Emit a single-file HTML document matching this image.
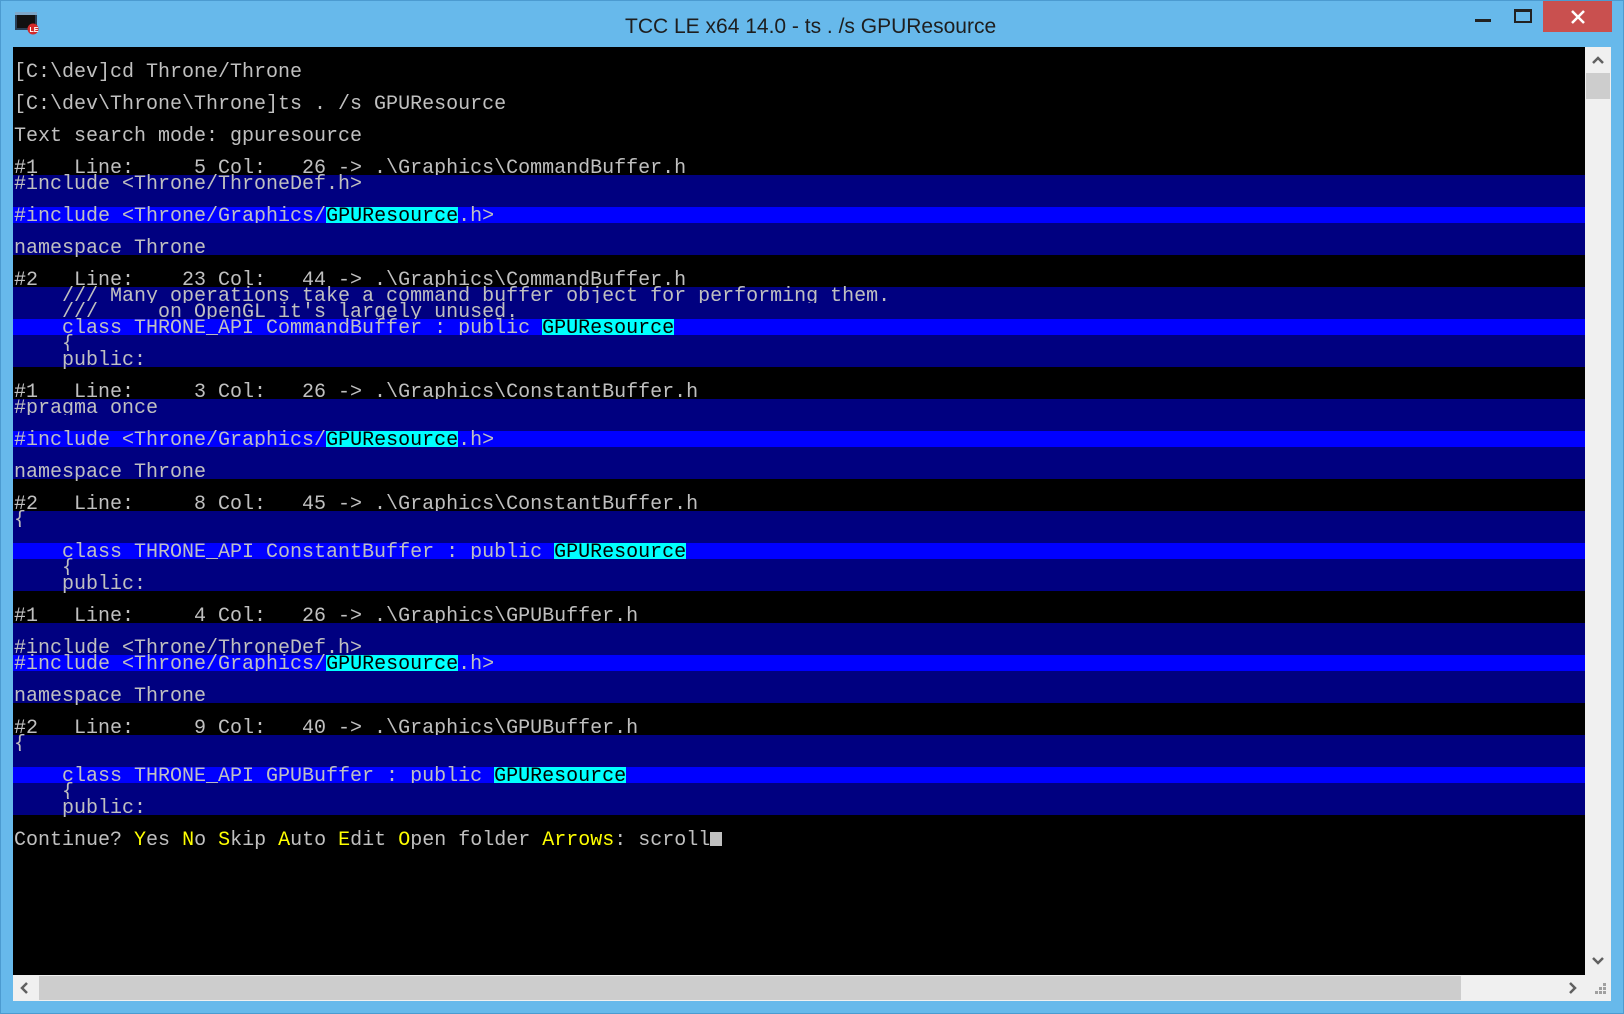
<!DOCTYPE html>
<html><head><meta charset="utf-8"><style>
*{margin:0;padding:0;box-sizing:border-box}
body{width:1624px;height:1014px;background:#67b9eb;position:relative;overflow:hidden;font-family:"Liberation Sans",sans-serif}
#frame{position:absolute;left:0;top:0;width:1624px;height:1014px;border:1px solid #4c9bd0}
#title{position:absolute;left:625px;top:15px;font-size:21px;color:#1e1e1e;white-space:nowrap}
#con{position:absolute;left:13px;top:47px;width:1572px;height:928px;background:#000;overflow:hidden}
.r{position:absolute;left:0;width:1572px;height:16px;font-family:"Liberation Mono",monospace;font-size:20px;line-height:19px;color:#c0c0c0;white-space:pre;padding-left:1px}
.d{background:#000080}.b{background:#0000ff}
.h{background:#00ffff;color:#000;display:inline-block;height:16px;line-height:19px;vertical-align:top}
.y{color:#ffff00}
.cur{display:inline-block;width:12px;height:14px;background:#c0c0c0;vertical-align:-1px}
#vs{position:absolute;left:1585px;top:47px;width:26px;height:928px;background:#f0f0f0}
#hs{position:absolute;left:13px;top:975px;width:1572px;height:26px;background:#f0f0f0}
#corner{position:absolute;left:1585px;top:975px;width:26px;height:26px;background:#f0f0f0}
</style></head><body>
<div id="frame"></div>
<svg style="position:absolute;left:14px;top:11px" width="26" height="24"><rect x="1" y="1" width="22" height="18" fill="#2a3f55"/><rect x="3" y="4" width="18" height="13" fill="#111"/><rect x="1" y="1" width="22" height="3" fill="#7fa7c9"/><circle cx="19" cy="18" r="5.5" fill="#d42a2a"/><text x="15.5" y="21" font-size="7" fill="#fff" font-family="Liberation Sans" font-weight="bold">LE</text></svg>
<div id="title">TCC LE x64 14.0 - ts . /s GPUResource</div>
<div style="position:absolute;left:1475px;top:19px;width:16px;height:3px;background:#222"></div>
<div style="position:absolute;left:1514px;top:9px;width:18px;height:14px;border:2px solid #222;border-top-width:3px"></div>
<div style="position:absolute;left:1543px;top:1px;width:69px;height:31px;background:#c9504f"></div>
<svg style="position:absolute;left:1570px;top:9px" width="16" height="16"><path d="M2 2L14 14M14 2L2 14" stroke="#fff" stroke-width="2.5"/></svg>
<div id="con">
<div class="r" style="top:16px">[C:\dev]cd Throne/Throne</div>
<div class="r" style="top:48px">[C:\dev\Throne\Throne]ts . /s GPUResource</div>
<div class="r" style="top:80px">Text search mode: gpuresource</div>
<div class="r" style="top:112px">#1   Line:     5 Col:   26 -> .\Graphics\CommandBuffer.h</div>
<div class="r d" style="top:128px">#include &lt;Throne/ThroneDef.h&gt;</div>
<div class="r d" style="top:144px"></div>
<div class="r b" style="top:160px">#include &lt;Throne/Graphics/<span class="h">GPUResource</span>.h&gt;</div>
<div class="r d" style="top:176px"></div>
<div class="r d" style="top:192px">namespace Throne</div>
<div class="r" style="top:224px">#2   Line:    23 Col:   44 -> .\Graphics\CommandBuffer.h</div>
<div class="r d" style="top:240px">    /// Many operations take a command buffer object for performing them.</div>
<div class="r d" style="top:256px">    ///     on OpenGL it's largely unused.</div>
<div class="r b" style="top:272px">    class THRONE_API CommandBuffer : public <span class="h">GPUResource</span></div>
<div class="r d" style="top:288px">    {</div>
<div class="r d" style="top:304px">    public:</div>
<div class="r" style="top:336px">#1   Line:     3 Col:   26 -> .\Graphics\ConstantBuffer.h</div>
<div class="r d" style="top:352px">#pragma once</div>
<div class="r d" style="top:368px"></div>
<div class="r b" style="top:384px">#include &lt;Throne/Graphics/<span class="h">GPUResource</span>.h&gt;</div>
<div class="r d" style="top:400px"></div>
<div class="r d" style="top:416px">namespace Throne</div>
<div class="r" style="top:448px">#2   Line:     8 Col:   45 -> .\Graphics\ConstantBuffer.h</div>
<div class="r d" style="top:464px">{</div>
<div class="r d" style="top:480px"></div>
<div class="r b" style="top:496px">    class THRONE_API ConstantBuffer : public <span class="h">GPUResource</span></div>
<div class="r d" style="top:512px">    {</div>
<div class="r d" style="top:528px">    public:</div>
<div class="r" style="top:560px">#1   Line:     4 Col:   26 -> .\Graphics\GPUBuffer.h</div>
<div class="r d" style="top:576px"></div>
<div class="r d" style="top:592px">#include &lt;Throne/ThroneDef.h&gt;</div>
<div class="r b" style="top:608px">#include &lt;Throne/Graphics/<span class="h">GPUResource</span>.h&gt;</div>
<div class="r d" style="top:624px"></div>
<div class="r d" style="top:640px">namespace Throne</div>
<div class="r" style="top:672px">#2   Line:     9 Col:   40 -> .\Graphics\GPUBuffer.h</div>
<div class="r d" style="top:688px">{</div>
<div class="r d" style="top:704px"></div>
<div class="r b" style="top:720px">    class THRONE_API GPUBuffer : public <span class="h">GPUResource</span></div>
<div class="r d" style="top:736px">    {</div>
<div class="r d" style="top:752px">    public:</div>
<div class="r" style="top:784px">Continue? <span class="y">Y</span>es <span class="y">N</span>o <span class="y">S</span>kip <span class="y">A</span>uto <span class="y">E</span>dit <span class="y">O</span>pen folder <span class="y">Arrows</span>: scroll<span class="cur"></span></div>
</div>
<div id="vs">
<svg style="position:absolute;left:6px;top:8px" width="14" height="10"><path d="M2 8L7 3L12 8" stroke="#606060" stroke-width="2.5" fill="none"/></svg>
<div style="position:absolute;left:1px;top:26px;width:24px;height:26px;background:#cdcdcd"></div>
<svg style="position:absolute;left:6px;top:909px" width="14" height="10"><path d="M2 2L7 7L12 2" stroke="#606060" stroke-width="2.5" fill="none"/></svg>
</div>
<div id="hs">
<svg style="position:absolute;left:6px;top:6px" width="10" height="14"><path d="M8 2L3 7L8 12" stroke="#606060" stroke-width="2.5" fill="none"/></svg>
<div style="position:absolute;left:26px;top:1px;width:1422px;height:24px;background:#cdcdcd"></div>
<svg style="position:absolute;left:1555px;top:6px" width="10" height="14"><path d="M2 2L7 7L2 12" stroke="#606060" stroke-width="2.5" fill="none"/></svg>
</div>
<div id="corner"><svg width="26" height="26"><g fill="#a0a0a0"><rect x="18" y="8" width="3" height="3"/><rect x="14" y="12" width="3" height="3"/><rect x="18" y="12" width="3" height="3"/><rect x="10" y="16" width="3" height="3"/><rect x="14" y="16" width="3" height="3"/><rect x="18" y="16" width="3" height="3"/></g></svg></div>
</body></html>
